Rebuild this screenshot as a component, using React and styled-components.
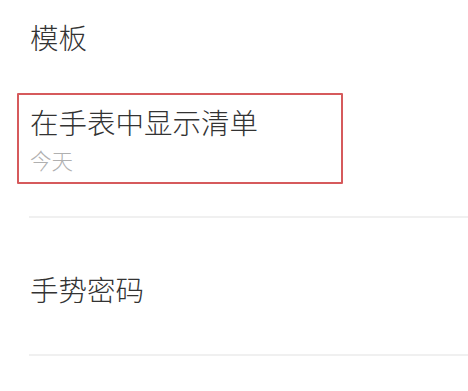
import React from "react";
import styled, { createGlobalStyle } from "styled-components";

const GlobalStyle = createGlobalStyle`
  html, body {
    margin: 0;
    padding: 0;
    background: #ffffff;
  }
  body {
    font-family: "Noto Sans CJK SC", "Noto Sans", sans-serif;
    color: #303030;
  }
`;

const Page = styled.div`
  width: 468px;
  height: 391px;
  overflow: hidden;
  background: #ffffff;
  padding-top: 23px;
  box-sizing: border-box;
`;

const SectionTitle = styled.div`
  padding-left: 30px;
  font-size: 28.5px;
  line-height: 28px;
  font-weight: 300;
  color: #333333;
`;

const Highlight = styled.div`
  margin: 42px 0 0 17px;
  width: 326px;
  box-sizing: border-box;
  border: 2px solid #d65a5c;
  border-radius: 1px;
  padding: 13px 11px 12px;
`;

const ItemTitle = styled.div`
  font-size: 28.5px;
  line-height: 28px;
  font-weight: 300;
  color: #333333;
`;

const ItemSub = styled.div`
  margin-top: 13px;
  font-size: 21.5px;
  line-height: 21px;
  font-weight: 300;
  color: #b0b0b0;
`;

const Divider = styled.div`
  margin-left: 29px;
  height: 2px;
  background: #f0f0f0;
  margin-top: ${(p) => p.$top || 0}px;
`;

const Row = styled.div`
  height: 136px;
  display: flex;
  align-items: center;
  padding-left: 30px;
  padding-top: 6px;
  box-sizing: border-box;
  font-size: 28.5px;
  line-height: 28px;
  font-weight: 300;
  color: #333333;
`;

const App = () => {
  return (
    <>
      <GlobalStyle />
      <Page>
        <SectionTitle>模板</SectionTitle>
        <Highlight>
          <ItemTitle>在手表中显示清单</ItemTitle>
          <ItemSub>今天</ItemSub>
        </Highlight>
        <Divider $top={32} />
        <Row>手势密码</Row>
        <Divider />
      </Page>
    </>
  );
};

export default App;
